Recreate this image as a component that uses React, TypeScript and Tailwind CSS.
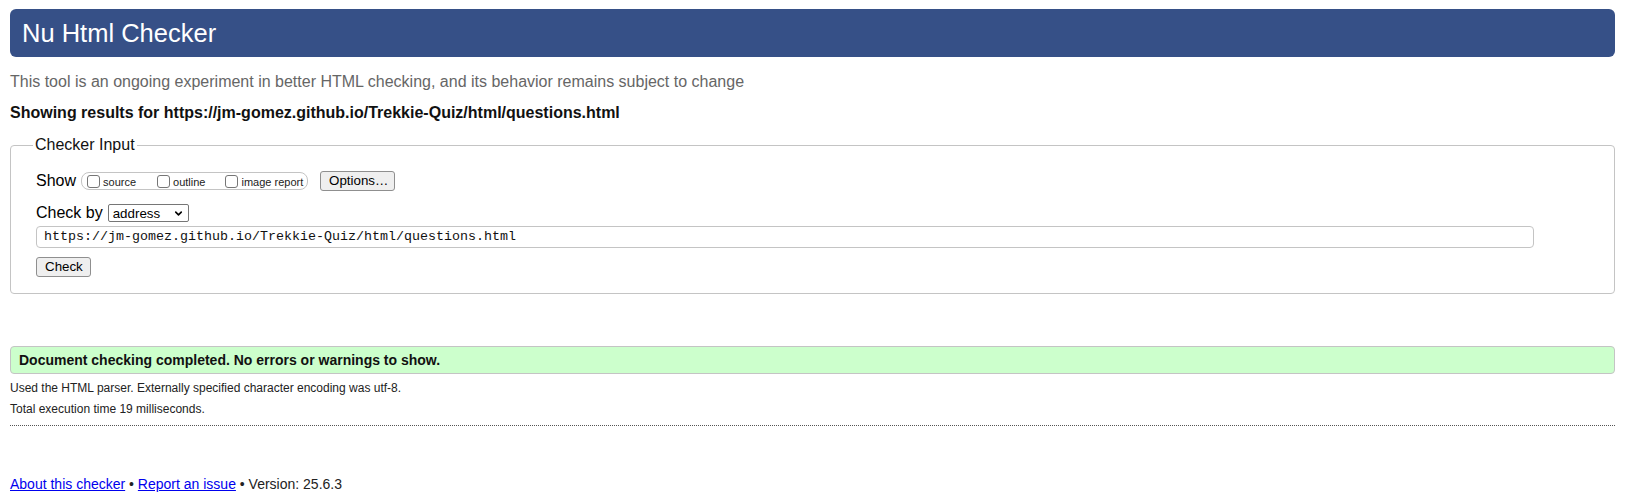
import React from 'react'
import { ChevronDown } from 'lucide-react'

const Box = ({ label }: { label: string }) => (
  <label className="flex items-center">
    <span className="w-[13px] h-[13px] rounded-[3px] border border-[#767676] bg-white" />
    <span className="ml-[3px] mt-[2px] text-[11px] leading-[13px] text-[#222]">{label}</span>
  </label>
)

const Btn = ({ children, className = '' }: { children: React.ReactNode; className?: string }) => (
  <button
    className={`h-[20px] px-[8px] rounded-[3px] border border-[#8f8f8f] bg-[#efefef] text-[13.33px] leading-[18px] text-black ${className}`}
  >
    {children}
  </button>
)

const App = () => {
  return (
    <div className="min-h-[500px] bg-white pt-[9px] pl-[10px] pr-[17px] font-['Liberation_Sans',Arial,sans-serif] text-black">
      <h1 className="h-[48px] rounded-[6px] bg-[#365087] pl-[12px] flex items-center text-[25.5px] font-normal text-white">
        Nu Html Checker
      </h1>

      <p className="mt-[16px] text-[16px] leading-[18px] text-[#666]">
        This tool is an ongoing experiment in better HTML checking, and its behavior remains subject to change
      </p>
      <p className="mt-[13px] text-[16px] leading-[18px] font-bold text-[#111]">
        Showing results for https://jm-gomez.github.io/Trekkie-Quiz/html/questions.html
      </p>

      <fieldset className="mt-[14px] rounded-[4px] border border-[#c4c4c4] pl-[25px] pr-[80px] pt-[17px] pb-[16px]">
        <legend className="-ml-[3px] px-[2px] text-[16px] leading-[18px] text-[#111]">Checker Input</legend>

        <div className="flex items-center h-[20px]">
          <span className="text-[16px] leading-[18px]">Show</span>
          <div className="ml-[5px] h-[18px] w-[227px] rounded-[8px] border border-[#c4c4c4] flex items-center pl-[5px]">
            <Box label="source" />
            <div className="w-[21px]" />
            <Box label="outline" />
            <div className="w-[20px]" />
            <Box label="image report" />
          </div>
          <Btn className="ml-[12px] w-[75px]">Options…</Btn>
        </div>

        <div className="mt-[12px] flex items-center h-[20px]">
          <span className="text-[16px] leading-[18px]">Check by</span>
          <div className="ml-[5px] h-[18px] w-[81px] rounded-[2px] border border-[#767676] bg-white flex items-center justify-between pl-[4px] pr-[4px]">
            <span className="text-[13.33px] leading-[15px]">address</span>
            <ChevronDown size={11} strokeWidth={3.5} className="text-black shrink-0" />
          </div>
        </div>

        <div className="mt-[3px] h-[22px] w-full rounded-[4px] border border-[#c4c4c4] bg-white flex items-center pl-[7px]">
          <span className="font-['Liberation_Mono',monospace] text-[13.33px] leading-[16px] text-[#111]">
            https://jm-gomez.github.io/Trekkie-Quiz/html/questions.html
          </span>
        </div>

        <Btn className="mt-[9px] w-[55px] block">Check</Btn>
      </fieldset>

      <div className="mt-[52px] h-[28px] rounded-[4px] border border-[#c4c4c4] bg-[#ccffcc] flex items-center pl-[8px]">
        <span className="text-[14px] font-bold text-[#111]">Document checking completed. No errors or warnings to show.</span>
      </div>

      <p className="mt-[7px] text-[12px] leading-[14px] text-[#222]">
        Used the HTML parser. Externally specified character encoding was utf-8.
      </p>
      <p className="mt-[7px] text-[12px] leading-[14px] text-[#222]">Total execution time 19 milliseconds.</p>
      <div className="mt-[9px] border-b border-dotted border-[#555]" />

      <p className="mt-[50px] text-[14px] leading-[16px] text-[#222]">
        <a href="#" className="text-[#0000ee] underline">About this checker</a>
        {' • '}
        <a href="#" className="text-[#0000ee] underline">Report an issue</a>
        {' • Version: 25.6.3'}
      </p>
    </div>
  )
}

export default App
